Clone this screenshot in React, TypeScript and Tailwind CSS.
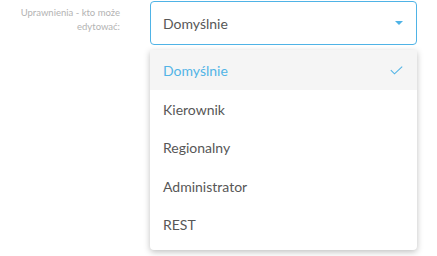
import React from "react";

const items = ["Domyślnie", "Kierownik", "Regionalny", "Administrator", "REST"];

export default function App() {
  return (
    <div className="w-[437px] h-[256px] bg-white overflow-hidden" style={{ fontFamily: "Lato, 'Noto Sans', sans-serif" }}>
      <div className="flex pt-[1px]">
        <div className="w-[150px] pr-[30px] pt-[5px] text-right text-[9.5px] leading-[14px] text-[#b3b3b3]">
          Uprawnienia - kto może
          <br />
          edytować:
        </div>
        <div className="w-[267px] flex flex-col">
          <div className="h-[44px] border border-[#4fb3e6] rounded-[4px] flex items-center pl-[12px] pr-[13px] justify-between">
            <span className="text-[14px] text-[#575757]">Domyślnie</span>
            <svg width="8" height="4" viewBox="0 0 8 4" className="mt-[-1px]">
              <path d="M0 0 L8 0 L4 4 Z" fill="#4fb3e6" />
            </svg>
          </div>
          <div className="mt-[5px] bg-white rounded-b-[4px] shadow-[0_2px_6px_rgba(0,0,0,0.25)] pb-[6px]">
            {items.map((it, i) => (
              <div
                key={it}
                className={
                  i === 0
                    ? "h-[40px] bg-[#f5f5f5] flex items-center justify-between pl-[13px] pr-[14px]"
                    : "h-[38.5px] flex items-center pl-[13px] pr-[14px]"
                }
              >
                <span className={i === 0 ? "text-[14px] text-[#52b4e6]" : "text-[14px] text-[#575757]"}>{it}</span>
                {i === 0 && (
                  <svg width="13" height="9" viewBox="0 0 13 9">
                    <path d="M0.8 4.2 L4.5 7.8 L12.2 0.6" fill="none" stroke="#52b4e6" strokeWidth="1.1" />
                  </svg>
                )}
              </div>
            ))}
          </div>
        </div>
      </div>
    </div>
  );
}
